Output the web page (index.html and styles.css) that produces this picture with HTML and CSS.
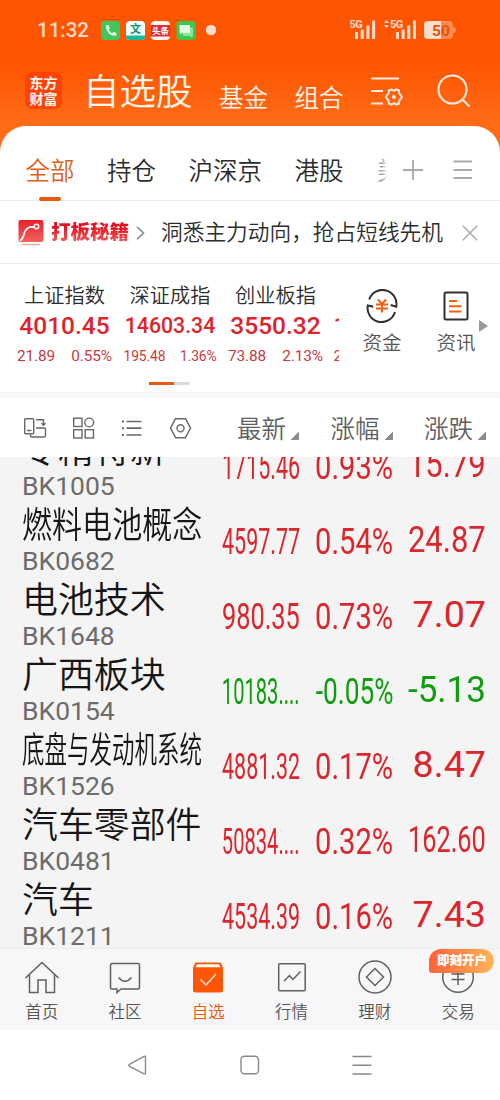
FILE: index.html
```html
<!DOCTYPE html>
<html lang="zh-CN">
<head>
<meta charset="utf-8" />
<meta name="viewport" content="width=500" />
<title>自选股</title>
<link rel="stylesheet" href="styles.css">
</head>
<body>
<header>
  <div class="status">
    <span class="time">11:32</span>
    <svg class="apps" width="120" height="20" viewBox="0 0 120 20">
      <rect width="19" height="19" rx="4" fill="#3fc65c"/>
      <path d="M5 4l2.500 0 1.500 3-1.500 1.500q1.200 2.600 3.700 3.700l1.600-1.400 2.800 1.500-.5 2.500q-8.100.5-10.100-8z" fill="#e9fbe8"/>
      <rect x="25" width="19" height="19" rx="4" fill="#f3fffb"/>
      <path d="M25 14.500h19v1q0 3.500-4 3.500h-11q-4 0-4-3.500z" fill="#19b89c"/>
      <text x="34.500" y="11.500" text-anchor="middle" font-size="11" font-weight="700" fill="#10917c">文</text>
      <rect x="50" width="19" height="19" rx="4" fill="#fff4ee"/>
      <rect x="50" y="4" width="19" height="11.500" fill="#dc3038"/>
      <text x="59.500" y="12.800" text-anchor="middle" font-size="8.500" font-weight="700" fill="#fff">头条</text>
      <rect x="75.500" width="19" height="19" rx="4" fill="#3fc64f"/>
      <path d="M82 6.500h10v8l-1.500 2-1.500-1.500h-7z" fill="#8fe29a"/>
      <path d="M78.500 4h10.500v8h-7.500l-2 2v-2h-1z" fill="#e2f9e2"/>
      <circle cx="110" cy="9" r="5.200" fill="#ffdccb"/>
    </svg>
    <svg class="signal" width="112" height="22" viewBox="0 0 112 22" fill="#ffdccb">
      <text class="net" x="-.5" y="9">5G</text>
      <path d="M5 13h3v7h-3zM10.700 10.500h3v9.500h-3zM16.400 6.500h3v13.500h-3zM22.100 1.500h3v18.500h-3z"/>
      <path d="M34 4l2.500-3 2.500 3zM34 6l2.500 3 2.500-3z"/>
      <text class="net" x="40" y="9">5G</text>
      <path d="M46 13h3v7h-3zM51.600 10.500h3v9.500h-3zM57.300 6.500h3v13.500h-3zM63 1.500h3v18.500h-3z"/>
      <path d="M78 2h21q4 0 4 4v1.500q3 1 3 3.500t-3 3.500v1.500q0 4-4 4h-21q-4 0-4-4v-10q0-4 4-4z" fill="#ff8a4d"/>
      <path d="M78 2h13v18h-13q-4 0-4-4v-10q0-4 4-4z"/>
      <text x="82" y="16.500" font-size="15.500" font-weight="700" fill="#e0540f">50</text>
    </svg>
  </div>
  <div class="titlebar">
    <div class="logo">东方<br>财富</div>
    <h1>自选股</h1>
    <a>基金</a>
    <a>组合</a>
    <svg class="manage" width="34" height="34" viewBox="0 0 34 34" fill="none" stroke="#ffeadd" stroke-width="2">
      <path d="M1 4.500h28M1 17h12M1 29.500h12"/>
      <path d="M15.800 23l2.700-3.600.5-3.200 2.500-.7 2.400 1.300 2.400-1.300 2.500.7.5 3.200 2.700 3.600-2.700 3.600-.5 3.200-2.500.7-2.400-1.300-2.400 1.300-2.500-.7-.5-3.200z" stroke-linejoin="round"/>
      <circle cx="23.900" cy="23" r="2" fill="#ffeadd" stroke="none"/>
    </svg>
    <svg class="search" width="34" height="34" viewBox="0 0 34 34" fill="none" stroke="#ffeadd" stroke-width="2.100">
      <circle cx="15.500" cy="15.500" r="14"/>
      <path d="M25.500 25.500l7 7"/>
    </svg>
  </div>
</header>

<section class="panel">
  <nav class="tabs">
    <a class="active">全部</a>
    <a>持仓</a>
    <a>沪深京</a>
    <a>港股</a>
    <a class="more">美</a>
    <svg width="70" height="20" viewBox="0 0 70 20" stroke="#a9a9a9" stroke-width="1.800">
      <path d="M0 10h20M10 0v20M50.500 1.500h18.500M50.500 10h18.500M50.500 18h18.500"/>
    </svg>
  </nav>

  <div class="promo">
    <svg width="26" height="26" viewBox="0 0 26 26" fill="none">
      <defs><linearGradient id="red" x1="0" y1="0" x2="0" y2="1"><stop offset="0" stop-color="#ec1f2c"/><stop offset="1" stop-color="#f4635f"/></linearGradient></defs>
      <rect x=".5" width="25" height="22" rx="2" fill="url(#red)"/>
      <path d="M2 20.500q2.500-1 4-6.500t6-7h4" stroke="#fff" stroke-width="1.800"/>
      <circle cx="18.500" cy="6.500" r="2.200" stroke="#fff" stroke-width="1.500"/>
      <path d="M4 24.500h18" stroke="#f8a7a5" stroke-width="1.500"/>
    </svg>
    <b>打板秘籍</b>
    <svg width="9" height="14" viewBox="0 0 9 14" fill="none" stroke="#8c8c8c" stroke-width="1.600"><path d="M1 .8l6.500 6.200-6.500 6.200"/></svg>
    <p>洞悉主力动向，抢占短线先机</p>
    <svg width="16" height="16" viewBox="0 0 16 16" stroke="#aaa" stroke-width="1.500"><path d="M.8.8l14.400 14.400M15.200.8l-14.400 14.400"/></svg>
  </div>

  <div class="market">
    <div class="indexes">
      <div class="index"><h3>上证指数</h3><strong>4010.45</strong><p><span>21.89</span><span>0.55%</span></p></div>
      <div class="index small"><h3>深证成指</h3><strong>14603.34</strong><p><span>195.48</span><span>1.36%</span></p></div>
      <div class="index"><h3>创业板指</h3><strong>3550.32</strong><p><span>73.88</span><span>2.13%</span></p></div>
      <div class="index next"><h3></h3><strong>1</strong><p>2</p></div>
    </div>
    <a class="tool">
      <svg width="34" height="34" viewBox="0 0 34 34" fill="none" stroke="#303030" stroke-width="2">
        <path d="M4.200 10.500a14 14 0 0 1 27 7.200l-5.500-1.700M30 23a14 14 0 0 1-27.200-6.500l5.500 1.200"/>
        <path d="M13 10.500l4 4.500 4-4.500M11 15.500h12M11 19.500h12M17 15v8.500" stroke="#f2600c"/>
      </svg>
      资金
    </a>
    <a class="tool">
      <svg width="34" height="34" viewBox="0 0 34 34" fill="none" stroke="#303030" stroke-width="2">
        <rect x="5.500" y="3.500" width="23" height="27" rx="1.500"/>
        <path d="M10 12h8M10 17.300h12.500M10 22.600h12.500" stroke="#f2600c"/>
      </svg>
      资讯
    </a>
    <i class="arrow"></i>
  </div>
  <div class="pager"><i></i></div>
</section>

<div class="toolbar">
  <svg width="170" height="24" viewBox="0 0 170 24" fill="none" stroke="#686868" stroke-width="1.400">
    <rect x="1.700" y="1.700" width="9" height="15" rx="1"/>
    <path d="M4 13.500h4.500M13 2.800h7.500v5.500M18.500 6.300l2 2 2-2M13 11h8q1.500 0 1.500 1.500v6q0 1.500-1.500 1.500h-12q-1.500 0-1.500-1.500v-1"/>
    <rect x="50.700" y="1.200" width="8.300" height="8.300"/>
    <circle cx="66.200" cy="5.500" r="4.400"/>
    <rect x="50.700" y="12.700" width="8.300" height="8.300"/>
    <rect x="62.200" y="12.700" width="8.300" height="8.300"/>
    <path d="M103.500 4.500h15M103.500 11.200h15M103.500 18h15" stroke-width="1.700"/>
    <path d="M99 4.500h2M99 11.200h2M99 18h2" stroke-width="2"/>
    <path d="M152.500 1.700h10l5 9.500-5 9.500h-10l-5-9.500z" stroke-linejoin="round"/>
    <circle cx="157.500" cy="11.200" r="3.500"/>
  </svg>
  <a>最新</a>
  <a>涨幅</a>
  <a>涨跌</a>
</div>

<main>
  <div class="row up">
    <div class="name"><h2 class="fit"><span>专精特新</span></h2><small>BK1005</small></div>
    <div class="num fit"><span>1715.46</span></div><div class="num fit"><span>0.93%</span></div><div class="num change fit"><span>15.79</span></div>
  </div>
  <div class="row up">
    <div class="name"><h2 class="fit"><span>燃料电池概念</span></h2><small>BK0682</small></div>
    <div class="num fit"><span>4597.77</span></div><div class="num fit"><span>0.54%</span></div><div class="num change fit"><span>24.87</span></div>
  </div>
  <div class="row up">
    <div class="name"><h2 class="fit"><span>电池技术</span></h2><small>BK1648</small></div>
    <div class="num fit"><span>980.35</span></div><div class="num fit"><span>0.73%</span></div><div class="num change fit"><span>7.07</span></div>
  </div>
  <div class="row down">
    <div class="name"><h2 class="fit"><span>广西板块</span></h2><small>BK0154</small></div>
    <div class="num fit"><span>10183....</span></div><div class="num fit"><span>-0.05%</span></div><div class="num change fit"><span>-5.13</span></div>
  </div>
  <div class="row up">
    <div class="name"><h2 class="fit"><span>底盘与发动机系统</span></h2><small>BK1526</small></div>
    <div class="num fit"><span>4881.32</span></div><div class="num fit"><span>0.17%</span></div><div class="num change fit"><span>8.47</span></div>
  </div>
  <div class="row up">
    <div class="name"><h2 class="fit"><span>汽车零部件</span></h2><small>BK0481</small></div>
    <div class="num fit"><span>50834....</span></div><div class="num fit"><span>0.32%</span></div><div class="num change fit"><span>162.60</span></div>
  </div>
  <div class="row up">
    <div class="name"><h2 class="fit"><span>汽车</span></h2><small>BK1211</small></div>
    <div class="num fit"><span>4534.39</span></div><div class="num fit"><span>0.16%</span></div><div class="num change fit"><span>7.43</span></div>
  </div>
</main>

<nav class="bottom">
  <a>
    <svg viewBox="0 0 36 36"><path d="M1.500 18l16.500-15.500 16.500 15.500M5.500 15v17.500h8.500v-12.500h8v12.500h8.500v-17.500"/></svg>
    首页
  </a>
  <a>
    <svg viewBox="0 0 36 36"><path d="M5 3.500h26q1.500 0 1.500 1.500v22.500q0 1.500-1.500 1.500h-17l-4 3.500v-3.500h-5q-1.500 0-1.500-1.500v-22.500q0-1.500 1.500-1.500zM11.500 17.500q6.500 7.500 13 0"/></svg>
    社区
  </a>
  <a class="active">
    <svg viewBox="0 0 36 36"><path d="M5.500 2.500h25l2.500 5v22.500q0 2.500-2.500 2.500h-25q-2.500 0-2.500-2.500v-22.500z" fill="#ff5606" stroke="none"/><path d="M7 4.300h22l1.500 3h-25z" fill="#fff" stroke="none"/><path d="M10.500 19.500l5.500 5.500 10-11" stroke="#ffe6d8"/></svg>
    自选
  </a>
  <a>
    <svg viewBox="0 0 36 36"><rect x="4.700" y="3.700" width="26.500" height="27" rx="1"/><path d="M10 21l5.500-5.500 3.500 4 7.500-8"/></svg>
    行情
  </a>
  <a>
    <svg viewBox="0 0 36 36"><circle cx="18" cy="17" r="16"/><path d="M18 8.500l8.500 8.500-8.500 8.500-8.500-8.500z"/></svg>
    理财
  </a>
  <a>
    <svg viewBox="0 0 36 36"><circle cx="18" cy="17" r="15.300"/><path d="M12 7l6 6.500 6-6.500M11.500 14h13M11.500 19.500h13M18 13v12"/></svg>
    交易
    <b class="badge">即刻开户</b>
  </a>
</nav>

<footer>
  <svg width="250" height="24" viewBox="0 0 250 24" fill="none" stroke="#888" stroke-width="1.400">
    <path d="M18.500 3.200v15.600q0 1.500-1.500 1l-14.500-7.500q-1.500-1 0-2l14.500-8q1.500-.6 1.500.9z"/>
    <rect x="114" y="2.200" width="17.500" height="17.500" rx="3.500"/>
    <path d="M225.500 2.500h19M225.500 11.200h19M225.500 20h19"/>
  </svg>
</footer>

<script>
// squeeze text that is wider than its column
var cells = document.querySelectorAll('.fit');
for (var i = 0; i < cells.length; i++) {
  var text = cells[i].firstChild;
  var ratio = cells[i].clientWidth / text.offsetWidth;
  if (ratio < 1) {
    text.style.transform = 'scaleX(' + ratio + ')';
  }
}
</script>
</body>
</html>
```
FILE: styles.css
```css
* {
  box-sizing: border-box;
}

body {
  width: 500px;
  height: 1100px;
  margin: 0;
  overflow: hidden;
  background: #fff;
  color: #2c2c2c;
  font-family: Roboto, "Noto Sans CJK SC", sans-serif;
  font-weight: 350;
}

h1, h2, h3, p {
  margin: 0;
  font-weight: 350;
}

svg, i {
  display: block;
  flex: none;
}

header {
  height: 152px;
  background: linear-gradient(#ff5500 40%, #ff6c17 82%);
  color: #fff5ed;
}

.status {
  display: flex;
  height: 60px;
  padding: 20px 0 0 37px;
}

.time {
  width: 64px;
  font-size: 20.5px;
  font-weight: 500;
  line-height: 21px;
  color: #ffdccb;
}

.apps {
  margin-top: 1px;
}

.signal {
  margin: -1px 0 0 129px;
}

.net {
  font-size: 11px;
  font-weight: 700;
  letter-spacing: -.5px;
}

.titlebar {
  display: flex;
  height: 66px;
  padding-left: 25px;
}

.logo {
  width: 37px;
  height: 37px;
  margin-top: 12px;
  padding-top: 3px;
  border-radius: 8px;
  background: #ff4308;
  font-size: 14px;
  font-weight: 700;
  line-height: 16px;
  text-align: center;
}

h1 {
  width: 136px;
  margin: 12px 0 0 21px;
  font-size: 36.5px;
  line-height: 42px;
}

.titlebar a {
  width: 75.5px;
  margin-top: 23px;
  font-size: 24.5px;
  line-height: 32px;
}

.manage {
  margin: 14px 33px 0 0;
}

.search {
  margin-top: 14px;
}

.panel {
  height: 266px;
  margin-top: -26px;
  border-radius: 26px 26px 0 0;
  background: #fff;
}

.tabs {
  display: flex;
  height: 75px;
  padding: 28px 0 0 25.5px;
  border-bottom: 1px solid #ededed;
  font-size: 24.5px;
  line-height: 36px;
}

.tabs a {
  margin-right: 32.5px;
}

.tabs .active {
  color: #e0601a;
}

.tabs .active:after {
  content: "";
  display: block;
  width: 22px;
  height: 4px;
  margin: 7px auto 0;
  border-radius: 2px;
  background: #e8590c;
}

.tabs .more {
  width: 11px;
  height: 36px;
  margin-right: 16px;
  overflow: hidden;
  background: linear-gradient(90deg, #fff, #999, #fff);
  -webkit-background-clip: text;
  color: transparent;
}

.tabs svg {
  margin-top: 6px;
}

.promo {
  display: flex;
  align-items: center;
  height: 63px;
  padding: 1px 0 0 18px;
  border-bottom: 1px solid #ededed;
}

.promo b {
  width: 85px;
  padding-left: 7px;
  font-size: 19.5px;
  font-weight: 900;
  line-height: 30px;
  white-space: nowrap;
  background: linear-gradient(#e80f20 30%, #f4635f 85%);
  -webkit-background-clip: text;
  color: transparent;
}

.promo b + svg {
  margin-left: 7px;
}

.promo p {
  flex: none;
  width: 317px;
  padding-left: 16px;
  font-size: 21.7px;
  line-height: 32px;
  white-space: nowrap;
}

.market {
  display: flex;
  height: 117px;
}

.indexes {
  display: flex;
  flex: none;
  gap: 10.5px;
  width: 339px;
  padding: 18px 0 0 17px;
  overflow: hidden;
}

.index {
  flex: none;
  width: 95px;
  text-align: center;
}

.index h3 {
  height: 28px;
  font-size: 20.2px;
  line-height: 28px;
}

.index strong {
  display: block;
  font-size: 24.5px;
  font-weight: 500;
  line-height: 32px;
  color: #e0232b;
}

.index p {
  display: flex;
  justify-content: space-between;
  font-size: 15.4px;
  font-weight: 400;
  line-height: 28px;
  letter-spacing: -.1px;
  color: #c9393f;
}

.index.small strong {
  font-size: 21.3px;
  line-height: 32px;
}

.index.small p {
  padding: 0 1px;
  font-size: 13.8px;
}

.index.next {
  text-align: left;
}

.tool {
  flex: none;
  width: 74px;
  padding: 25px 0 0 12px;
  font-size: 19.5px;
  line-height: 28px;
  text-align: center;
  color: #555;
}

.tool svg {
  margin: 0 auto 7px;
}

.arrow {
  margin: 56px 0 0 -8px;
  height: 12px;
  border: 6px solid transparent;
  border-left: 9px solid #999;
  border-right: 0;
}

.pager {
  width: 41px;
  height: 3px;
  margin: 1px 0 0 149px;
  border-radius: 2px;
  background: #d9d9d9;
}

.pager i {
  width: 25px;
  height: 3px;
  background: #e8590c;
}

.toolbar {
  display: flex;
  height: 65px;
  padding: 16px 0 0 23px;
  border-top: 6px solid #f7f7f9;
}

.toolbar svg {
  margin: 3px 44px 0 0;
}

.toolbar a {
  display: flex;
  flex: none;
  width: 93.5px;
  font-size: 24.5px;
  line-height: 32px;
  color: #606060;
}

.toolbar a:after {
  content: "";
  width: 8px;
  height: 8px;
  margin: 18px 0 0 5px;
  background: linear-gradient(135deg, transparent 50%, #8c8c8c 50%);
}

main {
  height: 491px;
  overflow: hidden;
  background: #f4f4f4;
}

.row {
  display: flex;
  height: 75px;
  padding-left: 22px;
  border-top: 1px solid #f1f1f1;
}

.row:first-child {
  margin-top: -30px;
}

.name {
  width: 200px;
}

.fit {
  white-space: nowrap;
}

.fit span {
  display: inline-block;
}

h2 {
  width: 178px;
  height: 42px;
  font-size: 35.9px;
  line-height: 47px;
  color: #161616;
}

/* five characters still fit at full width */
.name h2 {
  width: 179.5px;
}

h2 span {
  transform-origin: left;
}

small {
  display: block;
  font-size: 26.5px;
  font-weight: 400;
  line-height: 32px;
  color: #6c6c6c;
}

.num {
  display: flex;
  justify-content: flex-end;
  width: 78px;
  margin-right: 15px;
  font-size: 37.7px;
  font-weight: 400;
  line-height: 77px;
}

.num span {
  flex: none;
  transform-origin: right;
}

.num.change {
  margin-right: 0;
  line-height: 73px;
}

.up {
  color: #da262c;
}

.down {
  color: #0d9d0d;
}

.bottom {
  display: flex;
  height: 82px;
  border-top: 1px solid #ececee;
  background: #f7f7f9;
}

.bottom a {
  position: relative;
  width: 83.3px;
  padding-top: 11px;
  font-size: 16.5px;
  line-height: 25px;
  text-align: center;
  color: #555;
}

.bottom svg {
  width: 36px;
  height: 36px;
  margin: 0 auto 4px;
  fill: none;
  stroke: #606060;
  stroke-width: 1.5;
}

.bottom .active {
  color: #e8590c;
}

.badge {
  position: absolute;
  left: 13px;
  top: 0;
  width: 65px;
  height: 24px;
  border-radius: 12px 12px 12px 3px;
  background: linear-gradient(90deg, #ff6238, #ffb65a);
  color: #fff;
  font-size: 12.5px;
  font-weight: 900;
  line-height: 24px;
}

footer {
  height: 70px;
  padding: 24px 0 0 127px;
}
```
